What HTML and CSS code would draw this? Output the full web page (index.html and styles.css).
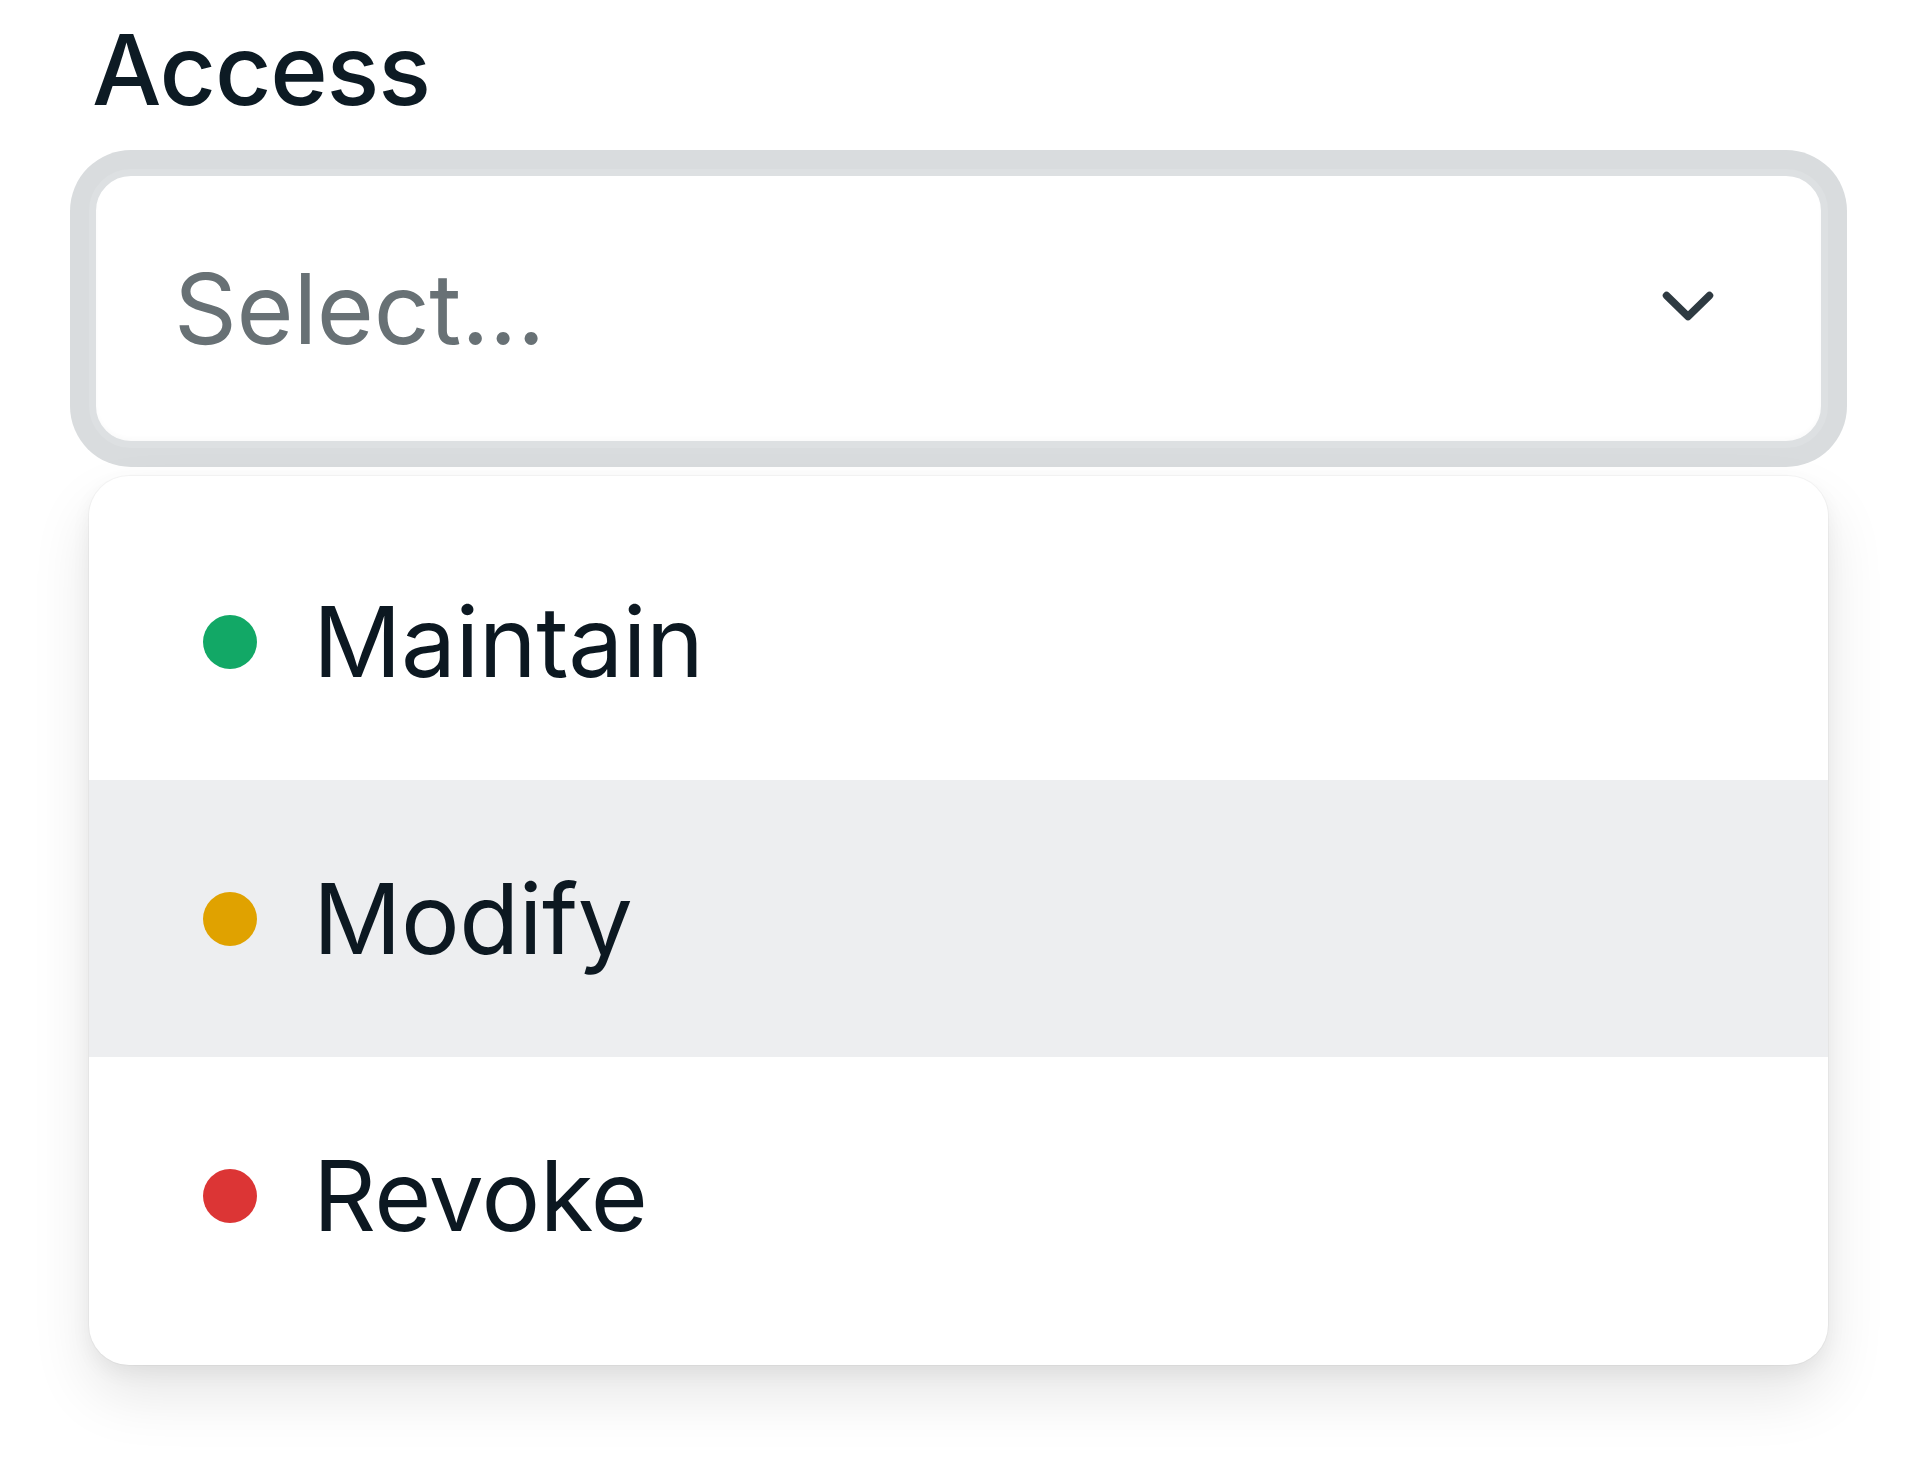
FILE: index.html
```html
<!DOCTYPE html>
<html lang="en">
<head>
<meta charset="utf-8">
<title>Access</title>
<link rel="stylesheet" href="styles.css">
</head>
<body>
<div class="field">
  <label class="label">Access</label>
  <div class="select">
    <span class="placeholder">Select...</span>
    <svg class="chevron" width="52" height="30" viewBox="0 0 52 30" aria-hidden="true">
      <polyline points="4.5,4.5 26,25.5 47.5,4.5" fill="none" stroke="#2e3a41" stroke-width="7.5" stroke-linecap="round" stroke-linejoin="round"/>
    </svg>
  </div>
  <ul class="menu">
    <li class="option"><span class="dot dot-green"></span><span class="option-text">Maintain</span></li>
    <li class="option option-active"><span class="dot dot-amber"></span><span class="option-text">Modify</span></li>
    <li class="option"><span class="dot dot-red"></span><span class="option-text">Revoke</span></li>
  </ul>
</div>
</body>
</html>
```

FILE: styles.css
```css
html, body {
  margin: 0;
  padding: 0;
  background: #ffffff;
}

body {
  font-family: Inter, "Noto Sans", "Liberation Sans", sans-serif;
  width: 1920px;
  height: 1470px;
  overflow: hidden;
}

.field {
  margin-left: 89px;
  width: 1739px;
  display: flex;
  flex-direction: column;
}

.label {
  display: block;
  padding-left: 3px;
  font-size: 98px;
  line-height: 140px;
  font-weight: 500;
  letter-spacing: -1.2px;
  color: #0d1b24;
}

.select {
  margin-top: 29px;
  box-sizing: border-box;
  height: 279px;
  border: 7px solid #dde0e2;
  border-radius: 42px;
  background: #ffffff;
  box-shadow: 0 0 0 19px #d9dcde, inset 0 -3px 4px rgba(0, 0, 0, 0.02);
  display: flex;
  align-items: center;
  justify-content: space-between;
  padding: 0 107px 0 78px;
}

.placeholder {
  font-size: 98px;
  line-height: 140px;
  font-weight: 400;
  letter-spacing: -0.3px;
  color: #687175;
}

.chevron {
  display: block;
  margin-top: -6px;
}

.menu {
  list-style: none;
  margin: 28px 0 0 0;
  padding: 27px 0 31px;
  background: #ffffff;
  border-radius: 40px;
  box-shadow: 0 30px 60px rgba(0, 0, 0, 0.10), 0 8px 20px rgba(0, 0, 0, 0.05), 0 0 0 1px rgba(0, 0, 0, 0.03);
  overflow: hidden;
}

.option {
  height: 277px;
  display: flex;
  align-items: center;
  padding-left: 114px;
  gap: 56px;
  font-size: 98px;
  line-height: 140px;
  font-weight: 400;
  letter-spacing: -0.5px;
  color: #0c1821;
}

.option-active {
  background: #edeef0;
}

.dot {
  width: 54px;
  height: 54px;
  border-radius: 50%;
  flex: none;
}

.dot-green {
  background: #12a866;
}

.dot-amber {
  background: #e0a200;
}

.dot-red {
  background: #dc3535;
}
```
